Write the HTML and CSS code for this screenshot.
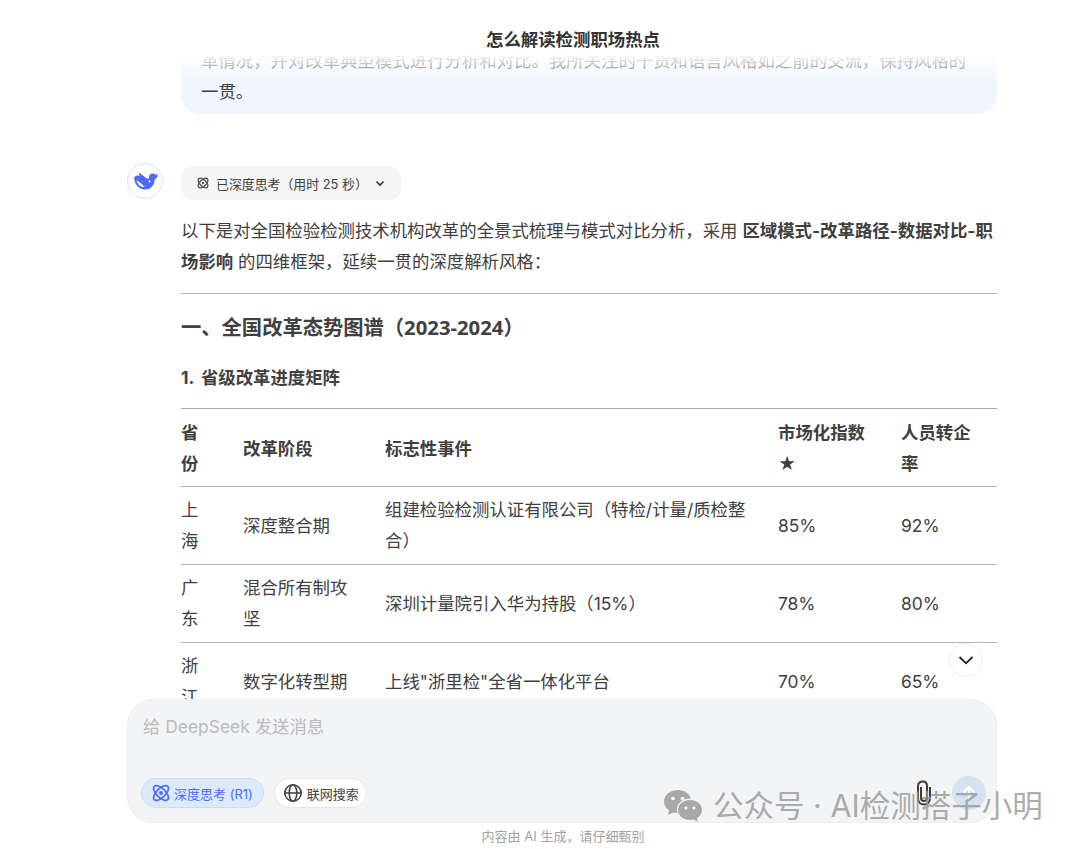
FILE: index.html
```html
<!DOCTYPE html>
<html lang="zh-CN">
<head>
  <meta charset="UTF-8" />
  <title>怎么解读检测职场热点</title>
  <link rel="stylesheet" href="styles.css">
</head>
<body>
  <div class="page">
    <header class="topbar">怎么解读检测职场热点</header>

    <main class="chat">
      <div class="thread">
        <div class="user-msg">
          <p>革情况，并对改革典型模式进行分析和对比。我所关注的干货和语言风格如之前的交流，保持风格的</p>
          <p>一贯。</p>
        </div>

        <div class="answer">
          <div class="avatar">
            <svg viewBox="0 0 25 18" width="25" height="18">
              <path fill="#4d6bfe" d="M1.200 5.500C1 11 5 17.500 12.500 17.500c5.500 0 8.500-4.500 9-8.500.2-1.500.5-2 1.500-2.500 1.200-.7 1.800-3 1.700-5-.7 1-1.500 1.300-2.200 1.300-1-1.300-3-1.800-4.500-1C16.500 2.500 16 4 16 5.500c0 1.500-1.500 1.700-3 .5C10 3.500 7.500 1.500 6 .5c-.5 1 0 2.500 1 3.700-2-1-4-.9-5.800 1.300z"/>
              <path fill="#fff" d="M3.500 8.500c2.500 1 5.500 3.500 8 6.500-3.500 .5-7-2.500-8-6.500z"/>
              <circle cx="16.500" cy="9.500" r="1" fill="#fff"/>
            </svg>
          </div>
          <div class="answer-body">
            <button class="think-pill">
              <svg class="atom" viewBox="0 0 16 16" width="14" height="14">
                <g fill="none" stroke="#555" stroke-width="1.700">
                  <ellipse cx="8" cy="8" rx="3.500" ry="7" transform="rotate(45 8 8)"/>
                  <ellipse cx="8" cy="8" rx="3.500" ry="7" transform="rotate(-45 8 8)"/>
                </g>
                <circle cx="8" cy="8" r="1.300" fill="#555"/>
              </svg>
              <span>已深度思考（用时 25 秒）</span>
              <svg viewBox="0 0 12 12" width="12" height="12">
                <path d="M2.500 4.500 6 8l3.500-3.500" fill="none" stroke="#333" stroke-width="1.600"/>
              </svg>
            </button>

            <p class="para">以下是对全国检验检测技术机构改革的全景式梳理与模式对比分析，采用 <strong>区域模式-改革路径-数据对比-职场影响</strong> 的四维框架，延续一贯的深度解析风格：</p>
            <hr class="rule">
            <h3 class="sec-title">一、全国改革态势图谱（2023-2024）</h3>
            <h4 class="sub-title">1. 省级改革进度矩阵</h4>

            <table class="matrix">
              <colgroup>
                <col class="c-prov"><col class="c-stage"><col class="c-event"><col class="c-index"><col class="c-rate">
              </colgroup>
              <thead>
                <tr><th>省份</th><th>改革阶段</th><th>标志性事件</th><th>市场化指数★</th><th>人员转企率</th></tr>
              </thead>
              <tbody>
                <tr><td>上海</td><td>深度整合期</td><td>组建检验检测认证有限公司（特检/计量/质检整合）</td><td>85%</td><td>92%</td></tr>
                <tr><td>广东</td><td>混合所有制攻坚</td><td>深圳计量院引入华为持股（15%）</td><td>78%</td><td>80%</td></tr>
                <tr><td>浙江</td><td>数字化转型期</td><td>上线"浙里检"全省一体化平台</td><td>70%</td><td>65%</td></tr>
              </tbody>
            </table>
          </div>
        </div>
      </div>

      <button class="scroll-down">
        <svg viewBox="0 0 18 18" width="18" height="18">
          <path d="M2.500 6 9 12.300 15.500 6" fill="none" stroke="#222" stroke-width="1.800"/>
        </svg>
      </button>
    </main>

    <section class="composer">
      <div class="placeholder">给 DeepSeek 发送消息</div>
      <div class="composer-row">
        <button class="tool tool-on">
          <svg viewBox="0 0 20 20" width="20" height="20">
            <g fill="none" stroke="#4d6bfe" stroke-width="1.700">
              <ellipse cx="10" cy="10" rx="4.500" ry="9.500" transform="rotate(45 10 10)"/>
              <ellipse cx="10" cy="10" rx="4.500" ry="9.500" transform="rotate(-45 10 10)"/>
            </g>
            <circle cx="10" cy="10" r="2" fill="#4d6bfe"/>
          </svg>
          <span>深度思考 (R1)</span>
        </button>
        <button class="tool">
          <svg viewBox="0 0 20 20" width="20" height="20">
            <g fill="none" stroke="#444" stroke-width="1.600">
              <circle cx="10" cy="10" r="8.200"/>
              <ellipse cx="10" cy="10" rx="3.800" ry="8.200"/>
              <path d="M1.800 10h16.400"/>
            </g>
          </svg>
          <span>联网搜索</span>
        </button>
        <div class="composer-end">
          <svg class="clip" viewBox="0 0 18 26" width="18" height="26">
            <path d="M6 7v11c0 2 1.200 3 3 3s3-1 3-3V6c0-3-1.500-4.500-4-4.500S3 3 3 6v12c0 4 2.500 6.500 6 6.500s6-2.500 6-6.500V7" fill="none" stroke="#3c3c3c" stroke-width="2"/>
          </svg>
          <button class="send">
            <svg viewBox="0 0 18 18" width="18" height="18">
              <path d="M9 16V3M3.500 8.500 9 3l5.500 5.500" fill="none" stroke="#fff" stroke-width="2"/>
            </svg>
          </button>
        </div>
      </div>
    </section>

    <footer class="notice">内容由 AI 生成，请仔细甄别</footer>

    <div class="watermark">
      <svg viewBox="0 0 40 34" width="40" height="34">
        <path fill="#a8a8a8" d="M15 1C7 1 1 6 1 12.500c0 3.700 2 6.800 5.200 9L5 26l5-2.600c1.500 .4 3 .6 4.500 .6-.4-1.200-.6-2.300-.6-3.500 0-6.300 5.800-11 13-11h1C26.500 4.500 21.300 1 15 1z"/>
        <path fill="#a8a8a8" d="M27 11c-6.500 0-12 4.300-12 10s5.500 10 12 10c1.300 0 2.600-.2 3.800-.5L35 33l-1-4c3-1.900 5-4.800 5-8 0-5.700-5.500-10-12-10z"/>
        <circle cx="10" cy="9.500" r="1.800" fill="#fff"/><circle cx="19.500" cy="9.500" r="1.800" fill="#fff"/>
        <circle cx="23" cy="19" r="1.500" fill="#fff"/><circle cx="31" cy="19" r="1.500" fill="#fff"/>
      </svg>
      <span>公众号 · AI检测搭子小明</span>
    </div>
  </div>
</body>
</html>
```

FILE: styles.css
```css
body {
  margin: 0;
  background: #fff;
  color: #404040;
  font-family: Inter, "Noto Sans CJK SC", sans-serif;
  font-size: 17.4px;
  line-height: 31px;
}

button {
  font-family: inherit;
  border: none;
  cursor: pointer;
}

.page {
  position: relative;
  height: 849px;
  overflow: hidden;
}

/* white bar plus the fade that eats the scrolled text */
.topbar {
  position: absolute;
  top: 0;
  left: 0;
  right: 0;
  z-index: 2;
  height: 56px;
  padding: 25px 0 0 66px;
  box-sizing: border-box;
  background: #fff;
  text-align: center;
  font-size: 17.4px;
  font-weight: 700;
  color: #333;
  line-height: 30px;
}

.topbar::after {
  content: "";
  position: absolute;
  top: 56px;
  left: 0;
  right: 0;
  height: 28px;
  background: linear-gradient(rgba(255, 255, 255, 0.95), rgba(255, 255, 255, 0));
}

.chat {
  position: relative;
  height: 699px;
  overflow: hidden;
}

.thread {
  width: 870px;
  margin-left: 127px;
}

.user-msg {
  margin: 0 0 52px 54px;
  padding: 45px 20px 7px;
  background: #eff6ff;
  border-radius: 0 0 20px 20px;
}

.user-msg p {
  margin: 0;
}

.answer {
  display: flex;
  gap: 18px;
}

.avatar {
  flex: none;
  display: flex;
  align-items: center;
  justify-content: center;
  width: 36px;
  height: 36px;
  box-sizing: border-box;
  margin-top: -3px;
  border: 1px solid #d5e4ff;
  border-radius: 50%;
}

.answer-body {
  flex: 1;
  min-width: 0;
}

.think-pill {
  display: flex;
  align-items: center;
  gap: 6px;
  height: 34px;
  padding: 0 15px;
  background: #f5f5f5;
  border-radius: 12px;
  font-size: 12.9px;
  color: #404040;
}

.para {
  margin: 15px 0 16px;
}

.rule {
  margin: 0;
  border: none;
  border-top: 1px solid #b4b4b4;
}

.sec-title {
  margin: 18px 0 0;
  font-family: "Noto Sans", "Noto Sans CJK SC", sans-serif;
  font-size: 20.3px;
  line-height: 31px;
  font-weight: 700;
}

.sub-title {
  margin: 19px 0 15px;
  font-size: 17.4px;
  line-height: 31px;
  font-weight: 700;
  word-spacing: 3px;
}

.matrix {
  width: 100%;
  table-layout: fixed;
  border-collapse: collapse;
  border-top: 1px solid #a8a8a8;
}

.c-prov { width: 62px; }
.c-stage { width: 142px; }
.c-event { width: 393px; }
.c-index { width: 123px; }
.c-rate { width: 96px; }

.matrix th,
.matrix td {
  padding: 7px 29px 8px 0;
  text-align: left;
  border-bottom: 1px solid #b4b4b4;
  font-weight: 400;
}

.matrix th {
  padding-top: 8px;
  padding-bottom: 7px;
  font-weight: 700;
}

.matrix th:last-child,
.matrix td:last-child {
  padding-right: 14px;
}

.scroll-down {
  position: absolute;
  top: 643px;
  left: 949px;
  display: flex;
  align-items: center;
  justify-content: center;
  width: 34px;
  height: 34px;
  padding: 0;
  background: #fff;
  border: 1px solid #eee;
  border-radius: 50%;
}

.composer {
  display: flex;
  flex-direction: column;
  justify-content: space-between;
  width: 870px;
  height: 124px;
  box-sizing: border-box;
  margin-left: 127px;
  padding: 11px 10px 12px 13px;
  background: #f3f4f6;
  border: 1px solid #eceef2;
  border-radius: 26px;
}

.placeholder {
  padding-left: 2px;
  color: #b9bbc0;
}

.composer-row {
  display: flex;
  align-items: center;
  gap: 10px;
}

.tool {
  display: flex;
  align-items: center;
  gap: 4px;
  height: 30px;
  box-sizing: border-box;
  padding: 0 7px 0 8px;
  background: #fff;
  border: 1px solid #e6e6e6;
  border-radius: 15px;
  font-size: 13px;
  color: #444;
}

.tool-on {
  padding: 0 10px 0 9px;
  gap: 3px;
  background: #dbeafe;
  border-color: #c6dcff;
  color: #4d6bfe;
}

.composer-end {
  display: flex;
  align-items: center;
  gap: 19px;
  margin-left: auto;
}

.send {
  display: flex;
  align-items: center;
  justify-content: center;
  width: 34px;
  height: 34px;
  padding: 0;
  background: #d6e2f0;
  border-radius: 50%;
}

.notice {
  padding-left: 46px;
  text-align: center;
  font-size: 13px;
  line-height: 26px;
  color: #a3a3a3;
}

/* wechat stamp on top of the shot */
.watermark {
  position: absolute;
  left: 663px;
  top: 786px;
  display: flex;
  align-items: center;
  gap: 10px;
  font-size: 30.5px;
  line-height: 40px;
  color: rgba(150, 150, 150, 0.8);
  white-space: nowrap;
}
```
